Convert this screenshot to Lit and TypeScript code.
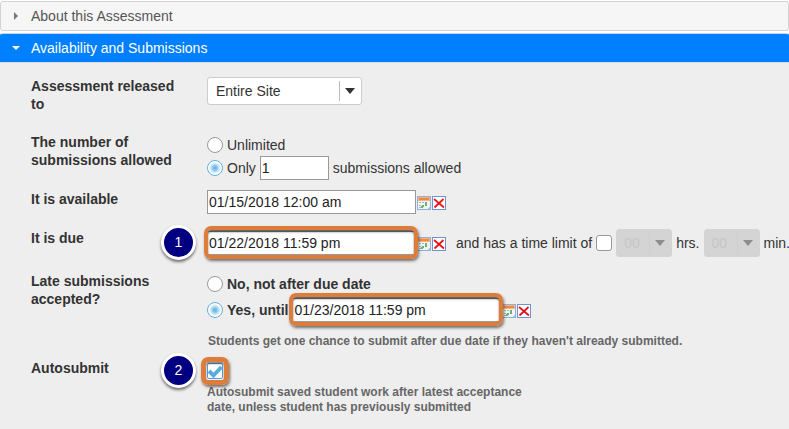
import { LitElement, html, css, svg } from "lit";
import { customElement } from "lit/decorators.js";

@customElement("calendar-tools")
export class CalendarTools extends LitElement {
  static styles = css`
    :host { display: inline-flex; gap: 1px; margin-left: 1px; padding-top: 1px; }
    button { display: block; width: 14px; height: 14px; padding: 0; border: 0; background: none; cursor: pointer; }
    svg { display: block; width: 14px; height: 14px; }
  `;

  private dots() {
    const greys = [[2, 6], [5, 6], [2, 9], [2, 11]];
    const greens = [[8, 6], [8, 8], [5, 9], [4, 10]];
    return svg`
      ${greys.map(([x, y]) => svg`<rect x=${x} y=${y} width="2" height="1" fill="#a9b4c4"/>`)}
      ${greens.map(([x, y]) => svg`<rect x=${x} y=${y} width="2" height="2" fill="#6cb074"/>`)}`;
  }

  render() {
    return html`
      <button type="button" aria-label="Pick a date">
        <svg viewBox="0 0 14 14" shape-rendering="crispEdges">
          <rect x="0.5" y="0.5" width="13" height="13" fill="#eef5f2" stroke="#8fb0dc" />
          <rect x="1" y="1" width="12" height="4" fill="#f9b27c" />
          <rect x="2" y="2" width="10" height="2" fill="#f0893f" />
          ${this.dots()}
          <path d="M10 13L13 10V13Z" fill="#a9c6ea" />
        </svg>
      </button>
      <button type="button" aria-label="Clear the date">
        <svg viewBox="0 0 14 14">
          <rect x="0.5" y="0.5" width="13" height="13" fill="#fff" stroke="#6d94cf" />
          <path d="M2 3L12 11.5M11.5 3L2.5 11.5" stroke="#e8141c" stroke-width="1.8" fill="none" />
        </svg>
      </button>
    `;
  }
}

@customElement("app-root")
export class AppRoot extends LitElement {
  static styles = css`
    :host {
      display: block;
      min-height: 100vh;
      padding-top: 1px;
      box-sizing: border-box;
      overflow: hidden;
      background: linear-gradient(#fff 60px, #eee 60px);
      color: #333;
      font: 14px/18px "Liberation Sans", Arial, sans-serif;
    }
    * { box-sizing: border-box; }
    .head {
      display: flex;
      align-items: center;
      gap: 11px;
      width: 100%;
      height: 30px;
      margin: 0 0 2px;
      padding: 0 11px;
      border: 1px solid #d3d3d3;
      border-radius: 3px;
      background: #f6f6f6;
      color: #555;
      font: inherit;
      text-align: left;
    }
    .head svg { width: 8px; height: 8px; fill: #777; }
    .head.open { height: 29px; margin: 0; border-color: #c5d5e5 #007fff #007fff; border-radius: 3px 3px 0 0; background: #007fff; color: #fff; }
    .head.open svg { fill: #fff; }
    .panel { padding: 14px 0 12px 31px; border-top: 1px solid #ddd; background: #eee; }
    .row { display: grid; grid-template-columns: 150px 1fr; column-gap: 26px; margin-bottom: 15px; }
    .row.roomy { margin-bottom: 20px; }
    .row.snug { margin-bottom: 10px; }
    .row:last-child { margin-bottom: 0; }
    .label { font-weight: bold; }
    .line { display: flex; align-items: center; height: 24px; white-space: nowrap; }
    .line.tall { height: 28px; }
    .line.strong { font-weight: bold; }
    .line.strong + .line.strong { margin-top: 2px; }
    .narrow { margin-bottom: -1px; }
    .choice { display: flex; align-items: center; gap: 4px; }
    input { margin: 0; font: inherit; color: #222; }
    input[type="radio"], input[type="checkbox"] {
      appearance: none;
      flex: none;
      width: 16px;
      height: 16px;
      border: 1px solid #999;
      background: #fff;
    }
    input[type="radio"] { border-radius: 50%; }
    input[type="radio"]:checked { border-color: #5fb0e0; background: radial-gradient(circle, #66b6e6 0 1px, #a3d4f1 3px, #fff 6px); }
    input[type="checkbox"] { border-radius: 3px; }
    .field { width: 209px; height: 24px; padding: 0 1px; border: 1px solid #999; border-radius: 0; background: #fff; font-weight: normal; }
    .field.count { width: 69px; margin: 0 4px; }
    .select { position: relative; display: flex; }
    select {
      appearance: none;
      width: 155px;
      height: 28px;
      padding: 0 8px;
      border: 1px solid #ccc;
      border-radius: 3px;
      background: #fff;
      color: #333;
      font: inherit;
    }
    .select svg { position: absolute; top: 10px; right: 6px; width: 12px; height: 8px; fill: #333; pointer-events: none; }
    .select::after { content: ""; position: absolute; top: 4px; bottom: 4px; right: 22px; width: 1px; background: #bbb; }
    .select.off select { width: 56px; padding: 0 7px; border-color: #d4d4d4; background: #d4d4d4; color: #c6c6c6; opacity: 1; }
    .select.off svg { fill: #8c8c8c; }
    .select.off::after { background: #cecece; }
    .limit { display: flex; align-items: center; gap: 4px; margin-left: 10px; }
    .limit label { display: flex; align-items: center; gap: 4px; }
    .marked { position: relative; display: flex; }
    .marked::after {
      content: "";
      position: absolute;
      inset: -5px -2px -4px -3px;
      border: 4px solid #dc7d3c;
      border-radius: 7px;
      box-shadow: 1px 2px 3px #0008, inset 0 2px 2px #0009;
      pointer-events: none;
    }
    .choice + .marked { margin-left: 4px; }
    .marked.check::after { inset: -6px; border-width: 5px; box-shadow: 1px 2px 3px #0008, inset 0 2px 2px #0006; }
    .marked input[type="checkbox"] { border-color: #5a9be0; border-radius: 2px; }
    .marked .tick { position: absolute; inset: 0; width: 16px; height: 16px; pointer-events: none; }
    .spot { position: relative; }
    .step {
      position: absolute;
      top: 50%;
      right: 100%;
      width: 35px;
      height: 35px;
      margin: -18px 11px 0 0;
      border: 3px solid #fff;
      border-radius: 50%;
      background: #000080;
      box-shadow: 0 2px 3px #0008;
      color: #fff;
      font-weight: normal;
      line-height: 29px;
      text-align: center;
    }
    .note { margin: 0; color: #666; font-size: 12px; font-weight: bold; line-height: 15px; }
    .note.gap { margin: 12px 0 0 1px; }
    .note.slim { max-width: 330px; margin-top: 2px; }
  `;

  private arrow() {
    return html`<svg viewBox="0 0 12 8" aria-hidden="true"><path d="M1 1H11L6 7Z" /></svg>`;
  }

  private units(name: string) {
    return html`<span class="select off">
      <select disabled aria-label=${name}><option>00</option></select>${this.arrow()}
    </span>`;
  }

  render() {
    return html`
      <button class="head" type="button" aria-expanded="false">
        <svg viewBox="0 0 8 8"><path d="M2 0L6 4L2 8Z" /></svg>About this Assessment
      </button>
      <button class="head open" type="button" aria-expanded="true">
        <svg viewBox="0 0 8 8"><path d="M0 2H8L4 6Z" /></svg>Availability and Submissions
      </button>
      <form class="panel">
        <div class="row roomy">
          <label class="label" for="released">Assessment released to</label>
          <div class="line tall">
            <span class="select">
              <select id="released"><option>Entire Site</option></select>${this.arrow()}
            </span>
          </div>
        </div>
        <div class="row snug">
          <span class="label">The number of submissions allowed</span>
          <div>
            <div class="line narrow">
              <label class="choice"><input type="radio" name="count" />Unlimited</label>
            </div>
            <div class="line">
              <label class="choice"><input type="radio" name="count" checked />Only</label>
              <input class="field count" id="count" value="1" /><label for="count">submissions allowed</label>
            </div>
          </div>
        </div>
        <div class="row">
          <label class="label" for="start">It is available</label>
          <div class="line">
            <input class="field" id="start" value="01/15/2018 12:00 am" /><calendar-tools></calendar-tools>
          </div>
        </div>
        <div class="row">
          <label class="label" for="due">It is due</label>
          <div class="line tall spot">
            <span class="step">1</span>
            <span class="marked"><input class="field" id="due" value="01/22/2018 11:59 pm" /></span>
            <calendar-tools></calendar-tools>
            <span class="limit">
              <label>and has a time limit of <input type="checkbox" /></label>
              ${this.units("Hours")} hrs. ${this.units("Minutes")} min.
            </span>
          </div>
        </div>
        <div class="row snug">
          <span class="label">Late submissions accepted?</span>
          <div>
            <div class="line strong">
              <label class="choice"><input type="radio" name="late" />No, not after due date</label>
            </div>
            <div class="line strong">
              <label class="choice"><input type="radio" name="late" checked />Yes, until</label>
              <span class="marked"><input class="field" aria-label="Late date" value="01/23/2018 11:59 pm" /></span>
              <calendar-tools></calendar-tools>
            </div>
            <p class="note gap">Students get one chance to submit after due date if they haven't already submitted.</p>
          </div>
        </div>
        <div class="row">
          <label class="label" for="auto">Autosubmit</label>
          <div>
            <div class="line spot">
              <span class="step">2</span>
              <span class="marked check">
                <input type="checkbox" id="auto" checked />
                <svg class="tick" viewBox="0 0 16 16"><path d="M2 8L6.5 12.5L14.5 4" fill="none" stroke="#58ace2" stroke-width="4" /></svg>
              </span>
            </div>
            <p class="note slim">Autosubmit saved student work after latest acceptance date, unless student has previously submitted</p>
          </div>
        </div>
      </form>
    `;
  }
}
